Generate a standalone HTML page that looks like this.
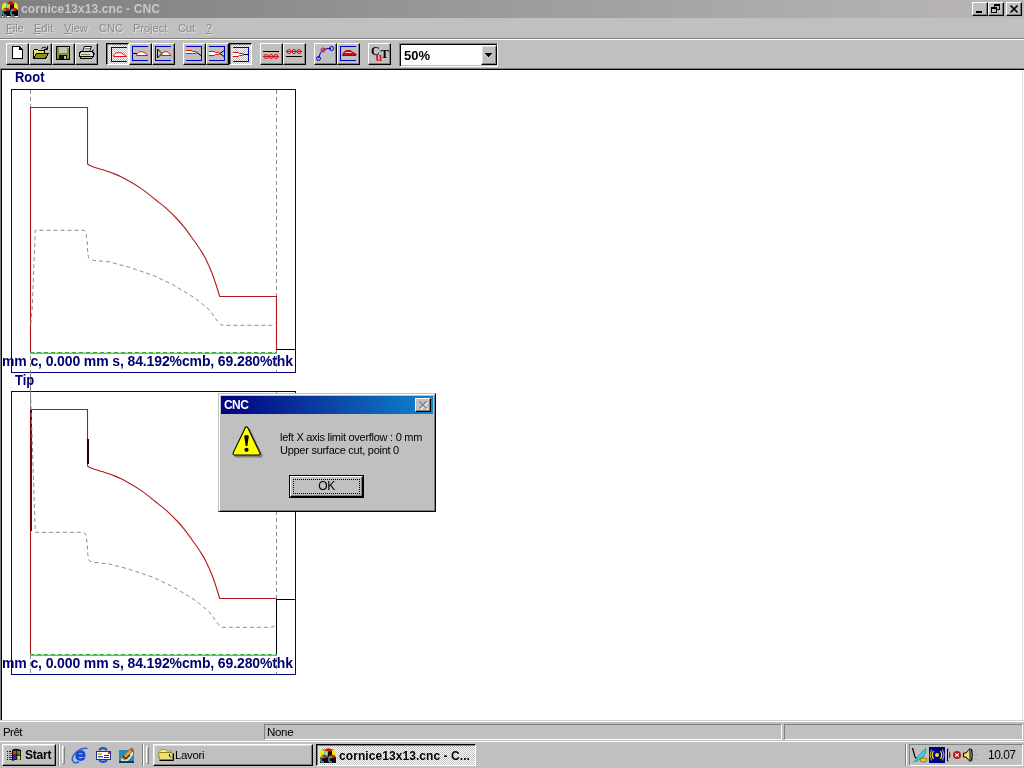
<!DOCTYPE html>
<html><head><meta charset="utf-8">
<style>
html,body{margin:0;padding:0;}
body{will-change:transform;width:1024px;height:768px;overflow:hidden;background:#c0c0c0;font-family:"Liberation Sans",sans-serif;font-size:11px;color:#000;position:relative;}
.abs{position:absolute;}
#title{left:0;top:0;width:1024px;height:18px;background:linear-gradient(90deg,#808080 0%,#8c8c8c 25%,#9c9c9c 50%,#acaaac 75%,#bab6ba 100%);}
#title .t{left:21px;top:1px;font-weight:bold;font-size:12px;color:#c8c8c8;line-height:16px;white-space:nowrap;letter-spacing:0.1px;}
.cb{position:absolute;top:2px;width:16px;height:14px;background:#c0c0c0;box-sizing:border-box;border:1px solid;border-color:#fff #000 #000 #fff;box-shadow:inset -1px -1px 0 #808080;}
#menu{left:0;top:18px;width:1024px;height:20px;background:#c0c0c0;}
#menu span{position:absolute;top:3px;font-size:11px;line-height:14px;color:#8a8a8a;text-shadow:1px 1px 0 rgba(255,255,255,.55);white-space:nowrap;}
#menu u{text-decoration:underline;text-underline-offset:1px;}
.tb{position:absolute;top:43px;width:23px;height:22px;box-sizing:border-box;background:#c0c0c0;border:1px solid;border-color:#fff #000 #000 #fff;box-shadow:inset -1px -1px 0 #808080;}
.tb.dn{border-color:#000 #fff #fff #000;box-shadow:inset 1px 1px 0 #808080;background:repeating-conic-gradient(#fff 0% 25%,#c0c0c0 0% 50%) 0 0/2px 2px;}
.tb svg{position:absolute;left:2px;top:2px;width:18px;height:17px;shape-rendering:crispEdges;}
#client{left:0;top:68px;width:1024px;height:652px;background:#fff;box-sizing:border-box;border-top:1px solid #808080;border-left:1px solid #808080;}
#client:before{content:"";position:absolute;left:0;top:0;right:0;bottom:0;border-top:1px solid #000;border-left:1px solid #000;}
.lbl{position:absolute;font-weight:bold;font-size:14px;color:#000070;white-space:nowrap;line-height:15px;transform-origin:0 0;}
.info{letter-spacing:-0.12px;}
.hd{transform:scaleX(.925);}
.box{position:absolute;left:11px;width:285px;height:284px;box-sizing:border-box;border:1px solid #000080;}
#status{left:0;top:720px;width:1024px;height:21px;background:#c0c0c0;border-top:1px solid #d0d0d0;box-shadow:inset 0 1px 0 #fff;box-sizing:border-box;}
.pane{position:absolute;top:724px;height:16px;box-sizing:border-box;border:1px solid;border-color:#808080 #fff #fff #808080;font-size:11.5px;letter-spacing:-0.3px;line-height:14px;white-space:nowrap;}
#task{left:0;top:741px;width:1024px;height:27px;background:#c0c0c0;border-top:1px solid #fff;box-sizing:border-box;}
.btn{position:absolute;box-sizing:border-box;background:#c0c0c0;border:1px solid;border-color:#fff #000 #000 #fff;box-shadow:inset -1px -1px 0 #808080,inset 1px 1px 0 #dfdfdf;}
.btn.dn{border-color:#000 #fff #fff #000;box-shadow:inset 1px 1px 0 #808080;background:repeating-conic-gradient(#fff 0% 25%,#c0c0c0 0% 50%) 0 0/2px 2px;}
.vdiv{position:absolute;top:744px;width:2px;height:22px;border-left:1px solid #808080;border-right:1px solid #fff;box-sizing:border-box;}
.hand{position:absolute;top:746px;width:3px;height:18px;box-sizing:border-box;border:1px solid;border-color:#fff #808080 #808080 #fff;background:#c0c0c0;}
#dlg{left:218px;top:393px;width:218px;height:119px;background:#c0c0c0;box-sizing:border-box;border:1px solid;border-color:#c0c0c0 #000 #000 #c0c0c0;box-shadow:inset 1px 1px 0 #fff,inset -1px -1px 0 #808080;}
</style></head><body>

<!-- TITLE BAR -->
<div id="title" class="abs">
  <svg class="abs" style="left:2px;top:1px" width="16" height="16" viewBox="0 0 16 16">
    <path d="M0 9 V6 Q0 2 4 1 H12 Q16 2 16 6 V9 Z" fill="#f4e810"/><path d="M2 1 H14 L12 3 H4 Z" fill="#a89818"/>
    <rect x="0" y="9" width="16" height="6" fill="#080808"/>
    <path d="M7 3 H12 V9 H7 Z" fill="#140808"/>
    <path d="M8 0 L12 1.5 L11 3.5 L7 4 L5 2 Z" fill="#d01818"/>
    <path d="M4 3 H5 L7 7 V3 H8 V9 H7 L5 5 V8 H4 Z" fill="#20e0f0"/>
    <path d="M1 8 L4 6.5 L8 8 L7 10 L3 10.5 Z" fill="#b82010"/><path d="M9 8 L12 6.5 L15.5 8 L14 10 L10 10.5 Z" fill="#b82010"/>
    <path d="M4 9 H1 V14 H4" fill="none" stroke="#60d8e8" stroke-width="1"/><path d="M12 9 H9 V14 H12" fill="none" stroke="#60d8e8" stroke-width="1"/>
    <rect x="0" y="15" width="1" height="1" fill="#fff"/><rect x="5" y="15" width="3" height="1" fill="#fff"/><rect x="13" y="15" width="3" height="1" fill="#fff"/>
    </svg>
  <div class="abs t">cornice13x13.cnc - CNC</div>
  <div class="cb" style="left:972px"><svg class="abs" style="left:0;top:0" width="14" height="12" shape-rendering="crispEdges"><rect x="3" y="8" width="6" height="2" fill="#000"/></svg></div>
  <div class="cb" style="left:988px"><svg class="abs" style="left:0;top:0" width="14" height="12" shape-rendering="crispEdges"><rect x="5" y="1" width="6" height="2" fill="#000"/><rect x="5" y="1" width="1" height="3" fill="#000"/><rect x="10" y="1" width="1" height="6" fill="#000"/><rect x="8" y="6" width="3" height="1" fill="#000"/><rect x="2" y="4" width="6" height="2" fill="#000"/><rect x="2" y="4" width="1" height="6" fill="#000"/><rect x="7" y="4" width="1" height="6" fill="#000"/><rect x="2" y="9" width="6" height="1" fill="#000"/></svg></div>
  <div class="cb" style="left:1006px"><svg class="abs" style="left:0;top:0" width="14" height="12"><path d="M3.5 2.5 L10.5 9.5 M10.5 2.5 L3.5 9.5" stroke="#000" stroke-width="1.6" fill="none"/></svg></div>
</div>

<!-- MENU -->
<div id="menu" class="abs">
  <span style="left:6px"><u>F</u>ile</span>
  <span style="left:34px"><u>E</u>dit</span>
  <span style="left:64px"><u>V</u>iew</span>
  <span style="left:99px">CNC</span>
  <span style="left:133px">Project</span>
  <span style="left:178px">Cut</span>
  <span style="left:206px"><u>?</u></span>
</div>
<div class="abs" style="left:0;top:38px;width:1024px;height:1px;background:#808080"></div>
<div class="abs" style="left:0;top:39px;width:1024px;height:1px;background:#fff"></div>

<!-- TOOLBAR placeholder -->
<div id="toolbar">
<div class="tb" style="left:6px"><svg viewBox="7 44 21 20" style="left:0;top:0;width:21px;height:20px"><path d="M12.5 46.5 H19.5 L22.5 49.5 V58.5 H12.5 Z" fill="#fff" stroke="#000"/><path d="M19.5 46.5 V49.5 H22.5 Z" fill="#000" stroke="#000"/></svg></div>
<div class="tb" style="left:29px"><svg viewBox="30 44 21 20" style="left:0;top:0;width:21px;height:20px"><path d="M33.5 58.5 V50.5 L34.5 49.5 H37.5 L38.5 50.5 H44.5 V53" fill="#e8e060" stroke="#000"/><path d="M33.5 58.5 L36.5 53.5 H48.5 L45.5 58.5 Z" fill="#909018" stroke="#000"/><path d="M41.5 48.5 Q44 45.5 47 48.5 M47.5 46 V49.5 H44" fill="none" stroke="#000" shape-rendering="auto"/></svg></div>
<div class="tb" style="left:52px"><svg viewBox="53 44 21 20" style="left:0;top:0;width:21px;height:20px"><rect x="56.5" y="46.5" width="13" height="13" fill="#909030" stroke="#000"/><rect x="59" y="47" width="8" height="6" fill="#c0c0c0"/><rect x="59" y="55" width="8" height="4" fill="#101010"/><rect x="64" y="56" width="2" height="3" fill="#c0c0c0"/><rect x="68" y="47" width="1" height="1" fill="#fff"/></svg></div>
<div class="tb" style="left:75px"><svg viewBox="76 44 21 20" style="left:0;top:0;width:21px;height:20px"><path d="M82.5 51.5 L84.5 46.5 H91.5 L89.5 51.5 Z" fill="#fff" stroke="#000" shape-rendering="auto"/><path d="M85 48.5 H90 M84.5 50 H89" stroke="#808080" shape-rendering="auto"/><path d="M79.5 52.5 L81.5 51.5 H91.5 L93.5 52.5 V56.5 H79.5 Z" fill="#d8d8d8" stroke="#000"/><path d="M80.5 56.5 V58.5 H91.5 L93.5 56.5" fill="#c0c0c0" stroke="#000"/><path d="M81 54.5 H90" stroke="#909030"/><path d="M91.5 51.5 L94 50 M93.5 56 L94.5 53" stroke="#000" shape-rendering="auto"/></svg></div>
<div class="tb dn" style="left:106px"><svg viewBox="107 44 21 20" style="left:0;top:0;width:21px;height:20px"><path d="M127 47.5 H111.5 V61.5 H127" fill="none" stroke="#0000c0" stroke-width="1.3"/><path d="M113.5 56.5 C114 53.5 116 52.7 119 52.7 C122 52.7 124.5 54.7 126.5 56.5 Z" fill="#fff" stroke="#e01010" stroke-width="1" shape-rendering="auto"/></svg></div>
<div class="tb" style="left:129px"><svg viewBox="130 44 21 20" style="left:0;top:0;width:21px;height:20px"><path d="M148 46.5 H132.5 V60.5 H148" fill="none" stroke="#0000c0" stroke-width="1.3"/><path d="M132 53.5 H137" stroke="#000"/><path d="M136.5 55.5 C137 52.5 139 51.7 141.5 51.7 C144 51.7 146 53.7 147.5 55.5 Z" fill="#fff" stroke="#e01010" stroke-width="1" shape-rendering="auto"/></svg></div>
<div class="tb" style="left:152px"><svg viewBox="153 44 21 20" style="left:0;top:0;width:21px;height:20px"><path d="M171 46.5 H155.5 V60.5 H171" fill="none" stroke="#0000c0" stroke-width="1.3"/><path d="M157.5 49 V58 L162 53.5 Z" fill="none" stroke="#000" shape-rendering="auto"/><path d="M161.5 55.5 C162 52.5 163.7 51.7 166 51.7 C168 51.7 169.5 53.7 171 55.5 Z" fill="#fff" stroke="#e01010" stroke-width="1" shape-rendering="auto"/></svg></div>
<div class="tb" style="left:183px"><svg viewBox="184 44 21 20" style="left:0;top:0;width:21px;height:20px"><path d="M186 46.5 H201.5 V60.5 H186" fill="none" stroke="#0000c0" stroke-width="1.3"/><path d="M186 50.5 H191 L192.5 51.5 H195 L197 52.5 L195 53.5 H192.5 L191 53.5 H186" fill="#fff" stroke="#e01010" shape-rendering="auto"/><path d="M197 52.5 L201.5 56" stroke="#000" shape-rendering="auto"/></svg></div>
<div class="tb" style="left:206px"><svg viewBox="207 44 21 20" style="left:0;top:0;width:21px;height:20px"><path d="M209 46.5 H224.5 V60.5 H209" fill="none" stroke="#0000c0" stroke-width="1.3"/><path d="M209 51.5 H214 L215.5 52.5 H218 L220 53.5 L218 54.5 H215.5 L214 55.5 H209" fill="#fff" stroke="#e01010" shape-rendering="auto"/><path d="M224 50.5 L220 53.5 L224 56.5" fill="none" stroke="#000" shape-rendering="auto"/></svg></div>
<div class="tb dn" style="left:229px"><svg viewBox="230 44 21 20" style="left:0;top:0;width:21px;height:20px"><path d="M233 47.5 H248.5 V61.5 H233" fill="none" stroke="#0000c0" stroke-width="1.3"/><path d="M233 52.5 H238 L239.5 53.5 H242 L244 54.5 L242 55.5 H239.5 L238 56.5 H233" fill="#fff" stroke="#e01010" shape-rendering="auto"/><path d="M244 54.5 H248" stroke="#000"/></svg></div>
<div class="tb" style="left:260px"><svg viewBox="261 44 21 20" style="left:0;top:0;width:21px;height:20px"><path d="M263 51.5 H279" stroke="#000"/><path d="M263 56.5 H279" stroke="#e01010"/><circle cx="266" cy="56.5" r="2" fill="none" stroke="#e01010" shape-rendering="auto"/><circle cx="271" cy="56.5" r="2" fill="none" stroke="#e01010" shape-rendering="auto"/><circle cx="276" cy="56.5" r="2" fill="none" stroke="#e01010" shape-rendering="auto"/></svg></div>
<div class="tb" style="left:283px"><svg viewBox="284 44 21 20" style="left:0;top:0;width:21px;height:20px"><path d="M286 51.5 H302" stroke="#e01010"/><circle cx="289" cy="51.5" r="2" fill="none" stroke="#e01010" shape-rendering="auto"/><circle cx="294" cy="51.5" r="2" fill="none" stroke="#e01010" shape-rendering="auto"/><circle cx="299" cy="51.5" r="2" fill="none" stroke="#e01010" shape-rendering="auto"/><path d="M286 56.5 H302" stroke="#000"/></svg></div>
<div class="tb" style="left:314px"><svg viewBox="315 44 21 20" style="left:0;top:0;width:21px;height:20px"><path d="M318.5 58.5 Q320 52 323 50 Q327 48 331 48.5" fill="none" stroke="#0000c0" shape-rendering="auto"/><circle cx="318.5" cy="58.5" r="2" fill="none" stroke="#0000c0" shape-rendering="auto"/><circle cx="331.5" cy="48.5" r="2" fill="none" stroke="#0000c0" shape-rendering="auto"/><circle cx="323" cy="50" r="2" fill="none" stroke="#e01010" shape-rendering="auto"/></svg></div>
<div class="tb" style="left:337px"><svg viewBox="338 44 21 20" style="left:0;top:0;width:21px;height:20px"><path d="M356 46.5 H340.5 V60.5 H356" fill="none" stroke="#0000c0" stroke-width="1.3"/><path d="M342.5 55.5 L343.5 53 L346 50.5 H350 L353 52.5 L356 54 V55.5 Z" fill="#c81010" stroke="#b00000" stroke-width="1" shape-rendering="auto"/><path d="M345.5 52.5 H351.5" stroke="#ffd0d0" stroke-width="1" shape-rendering="auto"/></svg></div>
<div class="tb" style="left:368px"><svg viewBox="369 44 21 20" style="left:0;top:0;width:21px;height:20px"><text shape-rendering="auto" x="371" y="55" font-family="Liberation Serif" font-weight="bold" font-size="12" fill="#000">C</text><text shape-rendering="auto" x="380.5" y="57.8" font-family="Liberation Serif" font-weight="bold" font-size="12.5" fill="#000">T</text><text shape-rendering="auto" x="375.5" y="61" font-family="Liberation Serif" font-weight="bold" font-size="12" fill="#e01010">u</text></svg></div>
<div class="abs" style="left:399px;top:43px;width:99px;height:24px;box-sizing:border-box;background:#fff;border:1px solid;border-color:#808080 #fff #fff #808080;box-shadow:inset 1px 1px 0 #000,inset -1px -1px 0 #c0c0c0"></div>
<div class="abs" style="left:404px;top:48px;font-weight:bold;font-size:13px;line-height:15px">50%</div>
<div class="btn" style="left:481px;top:45px;width:16px;height:20px"><svg class="abs" style="left:3px;top:7px" width="7" height="4" shape-rendering="crispEdges"><path d="M0 0 H7 L3.5 4 Z" fill="#000"/><rect x="0" y="0" width="7" height="1"/><rect x="1" y="1" width="5" height="1"/><rect x="2" y="2" width="3" height="1"/><rect x="3" y="3" width="1" height="1"/></svg></div>
</div>

<!-- CLIENT -->
<div id="client" class="abs"></div>
<div class="abs" style="left:1022px;top:70px;width:1px;height:650px;background:#dcdcdc"></div>
<div id="draw"><svg class="abs" style="left:0;top:0" width="320" height="720" viewBox="0 0 320 720">
<g fill="none" stroke-width="1">
<!-- boxes -->
<rect x="11.5" y="89.5" width="284" height="283" stroke="#000080"/>
<rect x="11.5" y="391.5" width="284" height="283" stroke="#000080"/>
<!-- long dashed verticals -->
<path d="M30.5 90 V373" stroke="#8c8c8c" stroke-dasharray="4 3"/>
<path d="M30.5 373 V409" stroke="#808080"/>
<path d="M276.5 90 V372 M276.5 392 V674" stroke="#8c8c8c" stroke-dasharray="4 3"/>
<path d="M30.5 655 V674" stroke="#8c8c8c" stroke-dasharray="4 3"/>
<!-- ROOT -->
<path d="M30.5 352 V107.5 H87.5 V163 L88 164.5 C88.8 164.9 90.6 165.8 92.9 166.7 C95.2 167.5 98.9 168.6 102 169.6 C105.1 170.6 108.0 171.3 111.7 172.8 C115.5 174.3 119.6 175.8 124.5 178.4 C129.4 181.0 135.9 184.9 141 188.4 C146.1 191.9 150.7 195.9 155 199.3 C159.3 202.7 162.9 205.4 166.8 208.9 C170.7 212.4 175.4 217.2 178.5 220.5 C181.6 223.8 183.1 225.8 185.5 228.9 C187.9 232.0 190.5 235.7 193 239.2 C195.5 242.7 198.4 246.7 200.5 250 C202.6 253.3 203.7 254.9 205.6 258.75 C207.5 262.6 210.2 268.5 211.9 272.8 C213.6 277.1 214.7 280.6 216 284.5 C217.3 288.4 219.1 294.5 219.7 296.5 H276.5 V349" stroke="#b01818" stroke-width="1.1" stroke-linejoin="round"/>
<path d="M276 349.5 H296" stroke="#000"/>
<polyline points="30.8,324 32.2,308 34,262 35.3,230.3 84,230.3 86,233 87.2,241.5 87.6,250 88.4,257.2 90,259.3 93.4,260.3 109,261.9 129.4,267.3 152.8,275.2 173.4,285 195.3,298.3 209.4,310 215.6,318.6 219,323 222,325.3 271.9,325.3 275.5,323.5" stroke="#8c8c8c" stroke-dasharray="4 3"/>
<path d="M30 353.5 H277" stroke="#58c858"/>
<path d="M30 352.5 H277" stroke="#b8f0b8"/>
<path d="M30 352.5 H277" stroke="#38a838" stroke-dasharray="4 3"/>
<!-- TIP -->
<path d="M30.5 654 V409.5 H87.5 V465 L88 466.5 C88.8 466.9 90.6 467.8 92.9 468.7 C95.2 469.6 98.9 470.6 102 471.6 C105.1 472.6 108.0 473.3 111.7 474.8 C115.5 476.3 119.6 477.8 124.5 480.4 C129.4 483.0 135.9 486.9 141 490.4 C146.1 493.9 150.7 497.9 155 501.3 C159.3 504.7 162.9 507.4 166.8 510.9 C170.7 514.4 175.4 519.2 178.5 522.5 C181.6 525.8 183.1 527.8 185.5 530.9 C187.9 534.0 190.5 537.7 193 541.2 C195.5 544.7 198.4 548.7 200.5 552 C202.6 555.3 203.7 557.0 205.6 560.75 C207.5 564.5 210.2 570.5 211.9 574.8 C213.6 579.1 214.7 582.5 216 586.5 C217.3 590.5 219.1 596.5 219.7 598.5 H276.5" stroke="#b01818" stroke-width="1.1" stroke-linejoin="round"/>
<path d="M31 409 V531" stroke="#700808" stroke-width="2"/>
<path d="M88 439 V464" stroke="#300000" stroke-width="2"/>
<path d="M276.5 599 V655 M276 599.5 H296" stroke="#000"/>
<polyline points="30.5,392 31.5,420 33,465 35.3,532.3 84,532.3 86,535 87.2,543.5 87.6,552 88.4,559.2 90,561.3 93.4,562.3 109,563.9 129.4,569.3 152.8,577.2 173.4,587 195.3,600.3 209.4,612 215.6,620.6 219,625 222,627.3 271.9,627.3 275.5,625.5" stroke="#8c8c8c" stroke-dasharray="4 3"/>
<path d="M30 655.5 H277" stroke="#58c858"/>
<path d="M30 654.5 H277" stroke="#b8f0b8"/>
<path d="M30 654.5 H277" stroke="#38a838" stroke-dasharray="4 3"/>
</g>
</svg>
<div class="lbl hd" style="left:15px;top:70px">Root</div>
<div class="lbl hd" style="left:15px;top:373px">Tip</div>
<div class="lbl info" id="info1" style="left:2px;top:354px">mm c, 0.000 mm s, 84.192%cmb, 69.280%thk</div>
<div class="lbl info" id="info2" style="left:2px;top:656px">mm c, 0.000 mm s, 84.192%cmb, 69.280%thk</div>
</div>

<!-- STATUS -->
<div id="status" class="abs"></div>
<div class="abs" style="left:3px;top:725px;font-size:11.5px;line-height:14px;letter-spacing:-0.55px">Prêt</div>
<div class="pane" style="left:264px;width:518px"><span style="position:absolute;left:2px;top:0">None</span></div>
<div class="pane" style="left:784px;width:239px"></div>

<!-- TASKBAR -->
<div id="task" class="abs"></div>
<div id="taskitems">
<div class="btn" style="left:2px;top:744px;width:54px;height:22px"></div>
<svg class="abs" style="left:6px;top:747px" width="17" height="16" viewBox="0 0 17 16">
  <path d="M6 3 Q9 1 12 2 L15 3 V13 Q12 12 9 13 L6 14 Z" fill="#000"/>
  <path d="M7 4 Q9 3 10.5 3.3 V7.5 Q9 7.2 7 8 Z" fill="#e03020"/>
  <path d="M11.3 3.5 Q13 3.6 14.2 4.2 V8.2 Q13 7.7 11.3 7.6 Z" fill="#30b030"/>
  <path d="M7 8.8 Q9 8 10.5 8.3 V12.3 Q9 12 7 12.8 Z" fill="#2030d0"/>
  <path d="M11.3 8.4 Q13 8.5 14.2 9 V12.8 Q13 12.4 11.3 12.4 Z" fill="#f0e020"/>
  <g shape-rendering="crispEdges"><rect x="1" y="4" width="1" height="1" fill="#000"/><rect x="3" y="4" width="2" height="1" fill="#000"/>
  <rect x="1" y="6" width="1" height="1" fill="#e03020"/><rect x="3" y="6" width="3" height="1" fill="#e03020"/>
  <rect x="1" y="8" width="1" height="1" fill="#000"/><rect x="3" y="8" width="3" height="1" fill="#e03020"/>
  <rect x="1" y="10" width="1" height="1" fill="#2030d0"/><rect x="3" y="10" width="3" height="1" fill="#2030d0"/>
  <rect x="1" y="12" width="1" height="1" fill="#000"/><rect x="3" y="12" width="3" height="1" fill="#2030d0"/></g>
</svg>
<div class="abs" style="left:25px;top:748px;font-weight:bold;font-size:12px;line-height:14px;letter-spacing:-0.2px">Start</div>
<div class="vdiv" style="left:58px"></div><div class="hand" style="left:62px"></div>
<!-- IE -->
<svg class="abs" style="left:71px;top:746px" width="18" height="18" viewBox="0 0 18 18">
  <circle cx="9.5" cy="9.5" r="6.3" fill="#9cc0f8"/>
  <path d="M5.8 9.6 H13.2 Q13.4 5.6 9.6 5.6 Q5.6 5.6 5.6 9.8 Q5.8 13.6 9.8 13.6 Q12.2 13.6 13.2 11.6" fill="none" stroke="#1848c8" stroke-width="2.6"/>
  <path d="M2 15.5 Q-0.5 11 6 5.5 Q11 1.5 16.5 2.5" fill="none" stroke="#3060d8" stroke-width="1.6"/>
  <path d="M2.2 16 Q4.5 17.5 8 15.8" fill="none" stroke="#3060d8" stroke-width="1.6"/>
</svg>
<!-- outlook-like -->
<svg class="abs" style="left:95px;top:747px" width="17" height="16" viewBox="0 0 17 16">
  <path d="M4 3 Q8 -1 12 3 M12 13 Q8 17 4 13" fill="none" stroke="#2850d0" stroke-width="2.2"/>
  <rect x="1.5" y="4.5" width="14" height="8" fill="#fff" stroke="#203080"/>
  <rect x="3" y="6" width="4" height="2" fill="#e8b020"/><rect x="3" y="9" width="5" height="1.5" fill="#4060d0"/>
  <rect x="9" y="8" width="5" height="1" fill="#203080"/><rect x="9" y="10" width="5" height="1" fill="#203080"/><rect x="13" y="5" width="2" height="2" fill="#e02020"/>
</svg>
<!-- desktop/pencil -->
<svg class="abs" style="left:118px;top:747px" width="17" height="16" viewBox="0 0 17 16">
  <rect x="1" y="3" width="15" height="13" fill="#2888b8"/><rect x="1" y="14" width="15" height="2" fill="#103858"/>
  <path d="M3 12 L9 5 H15 V8 L10 14 H3 Z" fill="#e8e0c8"/>
  <path d="M4 11 L12 2 L14.5 4 L6.5 12.5 Z" fill="#e8a030" stroke="#604010" stroke-width=".6"/>
  <path d="M12 2 L14 0.5 L15.5 2.5 L14.5 4 Z" fill="#e04040"/>
  <path d="M5 9 L8 12 L12 8" fill="none" stroke="#202020" stroke-width="1.2"/>
</svg>
<div class="vdiv" style="left:142px"></div><div class="hand" style="left:146px"></div>
<!-- Lavori -->
<div class="btn" style="left:153px;top:744px;width:160px;height:22px"></div>
<svg class="abs" style="left:157px;top:748px" width="17" height="14" viewBox="0 0 17 14">
  <path d="M2.5 3.5 L4 1.5 H8 L9.5 3 H14.5 V5" fill="#f8f098" stroke="#a09030" stroke-width="1"/>
  <path d="M1.5 5.5 Q1 4.5 2.5 4.5 H14 Q15.5 4.5 15.5 6 V11.5 H2.5 Z" fill="#f0e070" stroke="#908020" stroke-width="1"/>
  <path d="M2.5 12.5 H16.5 V5.5" fill="none" stroke="#000" stroke-width="1"/>
  <path d="M12.5 6 V8 L14 9.5" fill="none" stroke="#000" stroke-width="1"/>
</svg>
<div class="abs" style="left:175px;top:748px;font-size:11.5px;line-height:14px;letter-spacing:-0.35px">Lavori</div>
<!-- active -->
<div class="btn dn" style="left:316px;top:744px;width:160px;height:22px"></div>
<svg class="abs" style="left:320px;top:748px" width="16" height="16" viewBox="0 0 16 16"><path d="M0 9 V6 Q0 2 4 1 H12 Q16 2 16 6 V9 Z" fill="#f4e810"/><path d="M2 1 H14 L12 3 H4 Z" fill="#a89818"/>
    <rect x="0" y="9" width="16" height="6" fill="#080808"/>
    <path d="M7 3 H12 V9 H7 Z" fill="#140808"/>
    <path d="M8 0 L12 1.5 L11 3.5 L7 4 L5 2 Z" fill="#d01818"/>
    <path d="M4 3 H5 L7 7 V3 H8 V9 H7 L5 5 V8 H4 Z" fill="#20e0f0"/>
    <path d="M1 8 L4 6.5 L8 8 L7 10 L3 10.5 Z" fill="#b82010"/><path d="M9 8 L12 6.5 L15.5 8 L14 10 L10 10.5 Z" fill="#b82010"/>
    <path d="M4 9 H1 V14 H4" fill="none" stroke="#60d8e8" stroke-width="1"/><path d="M12 9 H9 V14 H12" fill="none" stroke="#60d8e8" stroke-width="1"/>
    <rect x="0" y="15" width="1" height="1" fill="#fff"/><rect x="5" y="15" width="3" height="1" fill="#fff"/><rect x="13" y="15" width="3" height="1" fill="#fff"/></svg>
<div class="abs" style="left:339px;top:749px;font-weight:bold;font-size:12px;line-height:14px;letter-spacing:0.07px;white-space:nowrap" id="tbt">cornice13x13.cnc - C...</div>
<!-- tray -->
<div class="vdiv" style="left:905px"></div>
<div class="abs" style="left:909px;top:744px;width:114px;height:22px;box-sizing:border-box;border:1px solid;border-color:#808080 #fff #fff #808080"></div>
<svg class="abs" style="left:911px;top:746px" width="70" height="18" viewBox="911 746 70 18">
  <path d="M912.5 748 L915 757 Q916 759 919 758" fill="none" stroke="#000" stroke-width="1.2"/>
  <path d="M925.5 748.5 Q927 755 920 759 L916 762 L918 756 Z" fill="#40d0e0" stroke="#207080" stroke-width=".6"/>
  <path d="M913 762.5 L919 757" stroke="#40c0c0" stroke-width="1.5"/>
  <ellipse cx="923.5" cy="760" rx="3.5" ry="2" fill="#e8d020" stroke="#604000" stroke-width=".6"/>
  <rect x="929" y="747" width="16" height="16" fill="#000080"/>
  <circle cx="937" cy="755" r="2" fill="#f0e020"/>
  <path d="M933.5 751 Q931 755 933.5 759 M940.5 751 Q943 755 940.5 759" fill="none" stroke="#f0e020" stroke-width="1.3"/>
  <path d="M931.5 749.5 Q928.5 755 931.5 760.5 M942.5 749.5 Q945.5 755 942.5 760.5" fill="none" stroke="#d0c020" stroke-width="1"/>
  <path d="M948.5 749 H947.5 V761 H948.5" fill="none" stroke="#000" stroke-width="1"/>
  <path d="M949 751 Q952 755 949 759 Z" fill="#c01010"/>
  <circle cx="957" cy="755" r="4" fill="#c01818"/>
  <path d="M955.3 753.3 L958.7 756.7 M958.7 753.3 L955.3 756.7" stroke="#fff" stroke-width="1.2"/>
  <path d="M963.5 753 H966 L970 748.5 V761.5 L966 757 H963.5 Z" fill="#f0e060" stroke="#000" stroke-width="1"/>
  <path d="M971.5 749 Q973 755 971.5 761" fill="none" stroke="#000" stroke-width="1.2"/>
  <path d="M974 752 L977 750 M974 755 H978 M974 758 L977 760" stroke="#a8a8a8" stroke-width="1"/>
</svg>
<div class="abs" style="left:988px;top:748px;font-size:12px;line-height:14px;letter-spacing:-0.5px">10.07</div>
</div>

<!-- DIALOG -->
<div id="dlg" class="abs">
  <div class="abs" style="left:2px;top:2px;width:212px;height:18px;background:linear-gradient(90deg,#000080 0%,#0a3ca0 45%,#1084d0 100%)"></div>
  <div class="abs" style="left:5px;top:4px;font-weight:bold;font-size:12px;line-height:15px;color:#fff;letter-spacing:-0.6px">CNC</div>
  <div class="cb" style="left:196px;top:4px"><svg class="abs" style="left:0;top:0" width="14" height="12"><path d="M4.5 3.5 L11.5 10.5 M11.5 3.5 L4.5 10.5" stroke="#fff" stroke-width="1.5" fill="none"/><path d="M3.5 2.5 L10.5 9.5 M10.5 2.5 L3.5 9.5" stroke="#808080" stroke-width="1.5" fill="none"/></svg></div>
  <svg class="abs" style="left:9px;top:28px" width="40" height="40" viewBox="228 421 40 40">
    <path d="M248.5 429.4 L260.6 454.5 H236.5 Z" fill="#808080" stroke="#808080" stroke-width="4" stroke-linejoin="round"/>
    <path d="M246.5 427.4 L258.6 452.5 H234.5 Z" fill="#ffff00" stroke="#000" stroke-width="4" stroke-linejoin="round"/>
    <path d="M246.5 427.4 L258.6 452.5 H234.5 Z" fill="#ffff00" stroke="#ffff00" stroke-width="1.8" stroke-linejoin="round"/>
    <path d="M244.2 435.6 Q244.2 434 246.5 434 Q248.8 434 248.8 435.6 L247.3 445 H245.7 Z" fill="#000"/>
    <circle cx="246.5" cy="448.8" r="2.1" fill="#000"/>
  </svg>
  <div class="abs" style="left:61px;top:37px;font-size:11px;line-height:13px;white-space:nowrap;letter-spacing:-0.27px" id="msg">left X axis limit overflow : 0 mm<br>Upper surface cut, point 0</div>
  <div class="abs" style="left:70px;top:81px;width:75px;height:23px;box-sizing:border-box;border:1px solid #000;">
    <div class="abs" style="left:0;top:0;width:73px;height:21px;box-sizing:border-box;background:#c0c0c0;border:1px solid;border-color:#fff #000 #000 #fff;box-shadow:inset -1px -1px 0 #808080"></div>
    <div class="abs" style="left:3px;top:3px;width:67px;height:15px;box-sizing:border-box;border:1px dotted #000"></div>
    <div class="abs" style="left:0;top:3px;width:73px;text-align:center;font-size:12px;line-height:14px;letter-spacing:-0.5px">OK</div>
  </div>
</div>

</body></html>
